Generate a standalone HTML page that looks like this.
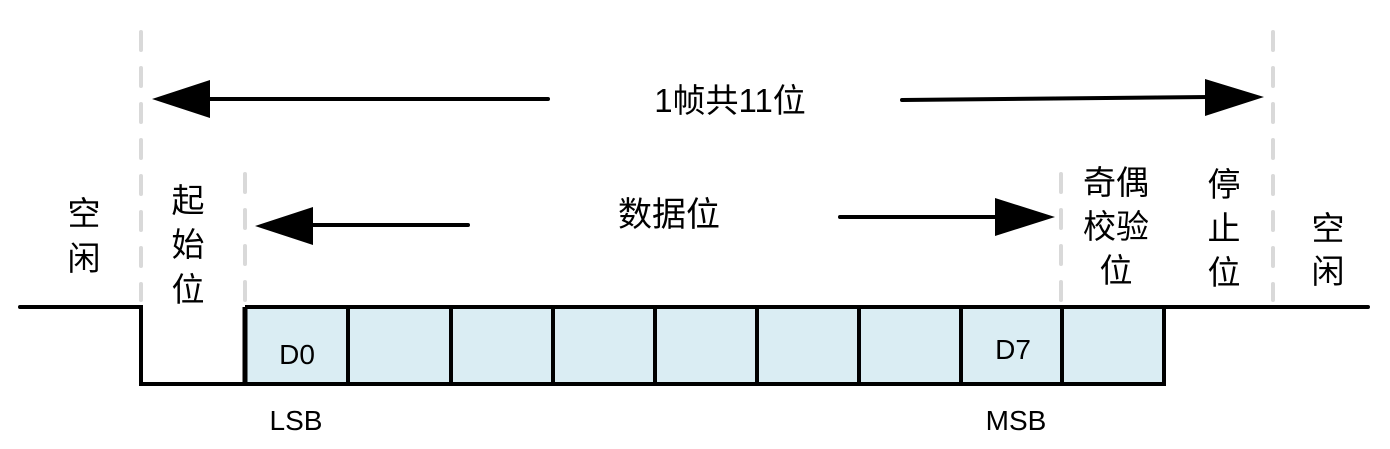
<!DOCTYPE html>
<html><head><meta charset="utf-8"><style>
html,body{margin:0;padding:0;background:#fff;}
svg{display:block;}
text{font-family:"Liberation Sans","Noto Sans CJK SC",sans-serif;fill:#000;}
</style></head><body>
<svg width="1390" height="449" viewBox="0 0 1390 449" xmlns="http://www.w3.org/2000/svg">
<g stroke="#d9d9d9" stroke-width="4" stroke-linecap="round" stroke-dasharray="18 18" fill="none">
<line x1="141" y1="32" x2="141" y2="300"/>
<line x1="245" y1="174" x2="245" y2="300"/>
<line x1="1061" y1="174" x2="1061" y2="300"/>
<line x1="1273" y1="32" x2="1273" y2="300"/>
</g>
<rect x="245" y="307" width="919" height="77" fill="#daedf3"/>
<g stroke="#000" stroke-width="4" fill="none">
<polyline points="20,307 141,307 141,384 1164,384 1164,307 1368,307" stroke-linecap="round"/>
<line x1="245" y1="307" x2="1164" y2="307"/>
<line x1="245" y1="307" x2="245" y2="386" stroke-width="5"/>
<line x1="348" y1="307" x2="348" y2="384"/>
<line x1="451" y1="307" x2="451" y2="384"/>
<line x1="553" y1="307" x2="553" y2="384"/>
<line x1="655" y1="307" x2="655" y2="384"/>
<line x1="757" y1="307" x2="757" y2="384"/>
<line x1="859" y1="307" x2="859" y2="384"/>
<line x1="961" y1="307" x2="961" y2="384"/>
<line x1="1062" y1="307" x2="1062" y2="384"/>
<line x1="548" y1="99" x2="205" y2="99" stroke-linecap="round"/>
<line x1="902" y1="100" x2="1210" y2="97" stroke-linecap="round"/>
<line x1="468" y1="225" x2="310" y2="225" stroke-linecap="round"/>
<line x1="840" y1="217" x2="1000" y2="217" stroke-linecap="round"/>
</g>
<polygon points="152,99 210,80 210,118" fill="#000"/>
<polygon points="1264,97 1205,79 1205,116" fill="#000"/>
<polygon points="255,226 313,207 313,245" fill="#000"/>
<polygon points="1055,217 995,198 995,236" fill="#000"/>
<text x="730" y="112" font-size="33" text-anchor="middle">1帧共11位</text>
<text x="669" y="226" font-size="34" text-anchor="middle">数据位</text>
<g font-size="33" text-anchor="middle">
<text x="84" y="225">空</text><text x="84" y="270">闲</text>
<text x="188" y="212">起</text><text x="188" y="256">始</text><text x="188" y="301">位</text>
<text x="1116" y="194">奇偶</text><text x="1116" y="238">校验</text><text x="1116" y="282">位</text>
<text x="1224" y="196">停</text><text x="1224" y="240">止</text><text x="1224" y="284">位</text>
<text x="1328" y="240">空</text><text x="1328" y="283">闲</text>
</g>
<g font-size="28" text-anchor="middle">
<text x="297" y="364">D0</text>
<text x="1013" y="359">D7</text>
<text x="296" y="430">LSB</text>
<text x="1016" y="430">MSB</text>
</g>
</svg>
</body></html>
